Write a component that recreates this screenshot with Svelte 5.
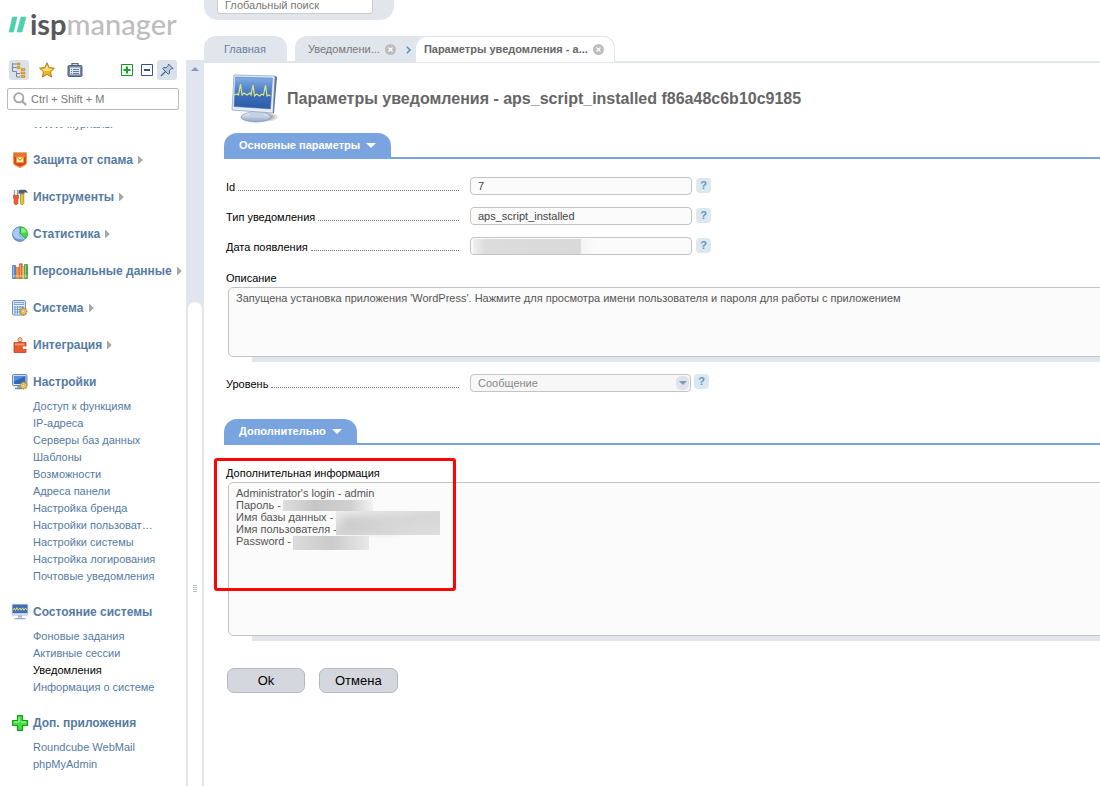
<script>
    let quickFilter = '';
    let globalSearch = '';
    let notificationId = '7';
    let notificationType = 'aps_script_installed';
    let notificationDate = '';
    let description = "Запущена установка приложения 'WordPress'. Нажмите для просмотра имени пользователя и пароля для работы с приложением";
    let level = 'message';
    let details = [
        "Administrator's login - admin",
        'Пароль -',
        'Имя базы данных -',
        'Имя пользователя -',
        'Password -'
    ].join('\n');

    const menu = [
        { title: 'Защита от спама', icon: 'shield' },
        { title: 'Инструменты', icon: 'tools' },
        { title: 'Статистика', icon: 'pie' },
        { title: 'Персональные данные', icon: 'books' },
        { title: 'Система', icon: 'system' },
        { title: 'Интеграция', icon: 'puzzle' },
        {
            title: 'Настройки',
            icon: 'settings',
            items: [
                'Доступ к функциям',
                'IP-адреса',
                'Серверы баз данных',
                'Шаблоны',
                'Возможности',
                'Адреса панели',
                'Настройка бренда',
                'Настройки пользоват…',
                'Настройки системы',
                'Настройка логирования',
                'Почтовые уведомления'
            ]
        },
        {
            title: 'Состояние системы',
            icon: 'monitor',
            items: ['Фоновые задания', 'Активные сессии', 'Уведомления', 'Информация о системе']
        },
        {
            title: 'Доп. приложения',
            icon: 'plus',
            items: ['Roundcube WebMail', 'phpMyAdmin']
        }
    ];

    const current = 'Уведомления';
</script>

{#snippet gear()}
    <g stroke="#a87a1c" stroke-width="1.6">
        <path d="M11.5 7.5v8M7.5 11.5h8M8.7 8.7l5.6 5.6M14.3 8.7l-5.6 5.6" />
    </g>
    <circle cx="11.5" cy="11.5" r="2.9" fill="#f6d76a" stroke="#b8892a" stroke-width=".8" />
    <circle cx="11.5" cy="11.5" r="1.1" fill="#fff" stroke="#a87a1c" stroke-width=".5" />
{/snippet}

{#snippet menuIcon(name)}
    <svg class="menu-icon" viewBox="0 0 16 16" aria-hidden="true">
        {#if name === 'shield'}
            <path d="M1.5.8h13v10.4c0 1.8-4.8 3.1-6.5 4.4-1.7-1.3-6.5-2.6-6.5-4.4z" fill="#e8401c" stroke="#e0a850" stroke-width="1.2" />
            <path d="M2.6 2h10.8v3H2.6z" fill="#f0704a" />
            <path d="M4.5 5h7v5.500h-7z" fill="#fff3a0" stroke="#e8a030" stroke-width=".6" />
            <path d="M4.700 5.200L8 8.200l3.300-3" fill="none" stroke="#a8781c" stroke-width=".9" />
        {:else if name === 'tools'}
            <path d="M2.5 1v5M5.5 1v5" stroke="#8fa2b5" stroke-width="1.3" />
            <path d="M1.5 6h2v2h1V6h2v3.5l-.6 1V14c0 1.2-.8 1.6-1.9 1.6S2.1 15.200 2.1 14v-3.500l-.6-1z" fill="#ee5a32" stroke="#c93a1c" stroke-width=".6" />
            <path d="M6.5 1.5c1.4-.8 3-.8 6-.8 1.800 0 2.700 1.500 3.200 3.300l-3.200-.8v1.600h-6z" fill="#50606e" />
            <path d="M8.5 5h3.300v9.600c0 1.200-3.300 1.200-3.300 0z" fill="#ddc83a" stroke="#8e8424" stroke-width=".7" />
        {:else if name === 'pie'}
            <circle cx="7.8" cy="8.2" r="7.3" fill="#6d9ade" stroke="#3f6db5" stroke-width=".7" />
            <path d="M1 8.500a6.500 6.500 0 0 1 6.200-6.800v7.200l4 4.600C7 13 2 13 1 8.500z" fill="#a9caf3" />
            <path d="M8 8.200l4.800 5.300" stroke="#e6f0fc" stroke-width="1" />
            <path d="M8.5 8V.8c4 0 7 3.100 7 7 0 1.800-.6 3.400-1.700 4.800z" fill="#3ddb3c" stroke="#22a72a" stroke-width=".7" />
            <path d="M9.2 1.700c2.700.3 4.800 2.100 5.300 4.600L9.200 7z" fill="#8af07a" />
        {:else if name === 'books'}
            <path d="M.5 2.500h3.200v13H.5z" fill="#4b87d8" stroke="#2f62ad" stroke-width=".6" />
            <path d="M4 4.500h3v11H4z" fill="#f2a23c" stroke="#c86c1c" stroke-width=".6" />
            <path d="M7.400.8h2.800v14.700H7.400z" fill="#e8663a" stroke="#b93a1c" stroke-width=".6" />
            <path d="M10.200 3.500h1.800v12h-1.800z" fill="#f5cf78" stroke="#c99434" stroke-width=".5" />
            <path d="M12.500 1.500h3v14h-3z" fill="#48ad3c" stroke="#2d812a" stroke-width=".6" />
            <path d="M1.500 3v12M8.300 1.500v13M13.400 2v13" stroke="#fff" stroke-opacity=".45" />
            <path d="M.5 13h15" stroke="#fff0a0" stroke-opacity=".7" />
        {:else if name === 'system'}
            <rect x=".6" y=".6" width="12.8" height="14.4" rx="1" fill="#e9f1fb" stroke="#5f86bd" />
            <path d="M2 2h10v3H2z" fill="#7fa5da" />
            <path d="M2.500 3.500h9" stroke="#dce9f9" />
            <path d="M3 6v8M5.500 6v8M8 6v8M10.500 6v4M2 7h10M2 9.500h8M2 12h6" stroke="#7a9ccd" />
            {@render gear()}
        {:else if name === 'puzzle'}
            <path d="M7 4h2v2H7z" fill="#ea5a30" />
            <circle cx="8" cy="2.700" r="2" fill="#fde0d0" stroke="#dc5a34" />
            <path d="M2 5.500h12v3.800c-1.800-1-3.800-.3-3.800 1.400s2 2.300 3.800 1.300v3.500H2z" fill="#ea5a30" stroke="#c4401c" stroke-width=".8" />
            <path d="M3 6.500h9.500v1.800H3z" fill="#f99a74" />
        {:else if name === 'settings'}
            <rect x=".6" y=".6" width="14.300" height="11" rx="1" fill="#dbe7f6" stroke="#587caf" />
            <path d="M2 2h11.500v8H2z" fill="#2f68ba" />
            <path d="M2 2h11.500L2 7.500z" fill="#5791db" />
            <path d="M5.500 12h3l.5 2H5z" fill="#93a8c6" />
            <path d="M3 14.500h7" stroke="#7089ad" stroke-width="1.500" />
            {@render gear()}
        {:else if name === 'monitor'}
            <path d="M.3.4h15.400v10.800H.3z" fill="#dfe8f4" stroke="#9bb0d0" stroke-width=".6" />
            <path d="M.5.600h15v8.600H.5z" fill="#3f6fb5" />
            <path d="M1 6l1.500-2 1 2.500L5 3.600l1.300 2.700L8 4l1.200 2.300 1.500-2.500 1.200 2.500L13.500 4 15 6" fill="none" stroke="#f0e878" stroke-width=".9" />
            <path d="M6 11.300h4v2.200H6z" fill="#a9b8cf" />
            <path d="M2 15.200c0-2 12-2 12 0z" fill="#8fa5cc" />
        {:else if name === 'plus'}
            <path d="M5.500.700h5v4.800h4.900v5h-4.900v4.900h-5v-4.900H.700v-5h4.800z" fill="#3fe03f" stroke="#179f1e" stroke-width="1.200" />
            <path d="M7 2v5H2M9 7h5" fill="none" stroke="#b0fba0" />
        {/if}
    </svg>
{/snippet}

{#snippet closeTab()}
    <button class="close" type="button" aria-label="Закрыть">
        <svg width="11" height="11" viewBox="0 0 11 11">
            <circle cx="5.500" cy="5.500" r="5.500" fill="#bdbdbd" />
            <path d="M3.500 3.500l4 4M7.500 3.500l-4 4" stroke="#fff" stroke-width="1.200" />
        </svg>
    </button>
{/snippet}

{#snippet help()}
    <button class="help" type="button" aria-label="Справка">?</button>
{/snippet}

{#snippet sectionTab(title)}
    <h2 class="section-head">
        <button type="button">
            {title}
            <svg width="10" height="5" viewBox="0 0 10 5"><path d="M0 0h10L5 5z" fill="#fff" /></svg>
        </button>
    </h2>
{/snippet}

<div class="page">
    <aside>
        <a class="logo" href="#home">
            <svg width="17" height="15" viewBox="0 0 17 15" aria-hidden="true">
                <path d="M3.500 0H8L4.500 15H0zM12 0h5l-4 15H8z" fill="#4ed0a8" stroke="#4ed0a8" stroke-width=".6" />
            </svg>
            <span><b>isp</b>manager</span>
        </a>

        <div class="toolbar">
            <button class="tool active" type="button" aria-label="Меню">
                <svg width="16" height="16" viewBox="0 0 16 16">
                    <path d="M1.500 1v8.500h4M1.500 2h4M1.500 5.500h4M5.500 9.500V15H9M5.500 11.500H9" fill="none" stroke="#7d8795" />
                    <path d="M6 1h3v2H6zM6 4.500h3v2H6zM10 6.500h4v2h-4zM10 10h4v2h-4zM10 13.500h4v2h-4z" fill="#f0ad20" stroke="#c17e16" stroke-width=".5" />
                </svg>
            </button>
            <button class="tool" type="button" aria-label="Избранное">
                <svg width="16" height="16" viewBox="0 0 16 16">
                    <path d="M8 .8l2.200 4.800 5.200.600-3.900 3.500 1.100 5.300L8 12.400 3.400 15l1.100-5.300L.6 6.200l5.200-.6z" fill="#f8b520" stroke="#b5791c" />
                    <path d="M8 3l1.500 3.500 3.500.6-3 1.900H5L3 7.200l3.500-.7z" fill="#ffe584" />
                </svg>
            </button>
            <button class="tool" type="button" aria-label="Список">
                <svg width="16" height="16" viewBox="0 0 16 16">
                    <path d="M5 3.500V1.600h6v1.900" fill="none" stroke="#5b6b80" stroke-width="1.300" />
                    <rect x="1" y="3.500" width="14" height="11" rx="1.200" fill="#7187a3" stroke="#4e6079" />
                    <path d="M3 5.500h10v7H3z" fill="#dfe7f0" />
                    <path d="M4 7.500h1M6 7.500h6M4 9.500h1M6 9.500h6M4 11.500h1M6 11.500h6" stroke="#64788f" />
                </svg>
            </button>
            <span class="spacer"></span>
            <button class="box-btn" type="button" aria-label="Развернуть все">
                <svg width="12" height="12" viewBox="0 0 12 12">
                    <path d="M.5.5h11v11H.5z" fill="#fff" stroke="#119a1c" />
                    <path d="M6 2.500v7M2.500 6h7" stroke="#14a61d" stroke-width="2" />
                </svg>
            </button>
            <button class="box-btn" type="button" aria-label="Свернуть все">
                <svg width="12" height="12" viewBox="0 0 12 12">
                    <path d="M.5.5h11v11H.5z" fill="#fff" stroke="#36558c" />
                    <path d="M3 6h6" stroke="#36558c" stroke-width="2" />
                </svg>
            </button>
            <button class="tool active" type="button" aria-label="Закрепить">
                <svg width="14" height="14" viewBox="0 0 14 14">
                    <path d="M8.500 1l4.500 4.500-1.500.2-2.200 2.200.2 2.600-1.200.8-5.600-5.600.8-1.200 2.600.2L8.300 2.500z" fill="#b9c9de" stroke="#4c6486" />
                    <path d="M5.500 8.500L1 13" stroke="#4c6486" stroke-width="1.300" />
                </svg>
            </button>
        </div>

        <label class="filter">
            <svg width="14" height="14" viewBox="0 0 14 14" aria-hidden="true">
                <circle cx="5.800" cy="5.800" r="4.600" fill="none" stroke="#a3a3a3" stroke-width="1.800" />
                <path d="M9 9l4 4" stroke="#a3a3a3" stroke-width="2.200" />
            </svg>
            <input type="text" placeholder="Ctrl + Shift + M" aria-label="Поиск по меню" bind:value={quickFilter} />
        </label>

        <nav>
            <a class="scrolled" href="#logs">WWW журналы</a>
            {#each menu as section}
                <section class:open={section.items}>
                    <button class="menu-title" type="button">
                        {@render menuIcon(section.icon)}
                        <span>{section.title}</span>
                        {#if !section.items}
                            <svg width="5" height="8" viewBox="0 0 5 8" aria-hidden="true">
                                <path d="M.5.3L4.300 4 .5 7.700z" fill="#aaa" stroke="#888" stroke-width=".6" />
                            </svg>
                        {/if}
                    </button>
                    {#if section.items}
                        <ul>
                            {#each section.items as item}
                                <li><a href="#menu" class:current={item === current}>{item}</a></li>
                            {/each}
                        </ul>
                    {/if}
                </section>
            {/each}
        </nav>
    </aside>

    <div class="splitter">
        <svg class="up" width="8" height="4" viewBox="0 0 8 4" aria-hidden="true"><path d="M0 4h8L4 0z" fill="#7f9cc0" /></svg>
        <div class="thumb">
            <svg width="4" height="8" viewBox="0 0 4 8" aria-hidden="true"><path d="M0 .5h4M0 2.500h4M0 4.500h4M0 6.500h4" stroke="#b4bcc8" /></svg>
        </div>
    </div>

    <main>
        <div class="global-search">
            <input type="text" placeholder="Глобальный поиск" aria-label="Глобальный поиск" bind:value={globalSearch} />
        </div>

        <div class="tabs">
            <a class="tab home" href="#home">Главная</a>
            <div class="tab-group">
                <div class="tab">
                    <a href="#notifications">Уведомлени...</a>
                    {@render closeTab()}
                    <svg class="chevron" width="5" height="8" viewBox="0 0 5 8" aria-hidden="true"><path d="M.8.800L4 4 .8 7.200" fill="none" stroke="#4f93ba" stroke-width="1.500" /></svg>
                </div>
                <div class="tab selected">
                    <a href="#params">Параметры уведомления - a...</a>
                    {@render closeTab()}
                </div>
            </div>
        </div>

        <div class="content">
            <header>
                <svg width="48" height="50" viewBox="0 0 48 50" aria-hidden="true">
                    <defs>
                        <linearGradient id="screen" x1="0" y1="0" x2="0" y2="1">
                            <stop offset="0" stop-color="#82afe6" />
                            <stop offset=".6" stop-color="#3a6cb8" />
                            <stop offset="1" stop-color="#2d5ca8" />
                        </linearGradient>
                        <linearGradient id="stand" x1="0" y1="0" x2="0" y2="1">
                            <stop offset="0" stop-color="#f5f8fc" />
                            <stop offset="1" stop-color="#8ba3c4" />
                        </linearGradient>
                        <radialGradient id="shade">
                            <stop offset="0" stop-color="#555" stop-opacity=".8" />
                            <stop offset="1" stop-color="#555" stop-opacity="0" />
                        </radialGradient>
                    </defs>
                    <ellipse cx="36" cy="43" rx="12" ry="5" fill="url(#shade)" />
                    <ellipse cx="25" cy="43" rx="15" ry="5" fill="url(#stand)" stroke="#7c93b3" stroke-width=".7" />
                    <path d="M19 36h13l1 6c-4 2-11 2-15 0z" fill="#c3d1e3" />
                    <path d="M3 1l41 1-2 37L1 36z" fill="#e7eef8" stroke="#8fa5c4" stroke-width=".8" />
                    <path d="M44 2l2 1-3 36h-1z" fill="#5f7391" />
                    <path d="M4.500 3l37 1-2 31L3 32.500z" fill="url(#screen)" stroke="#4d76b3" stroke-width=".5" />
                    <path d="M3 21l3-1 1.500 1L9.500 10l1.500 11 2-2 3 2 3-2 1 2L22 11l1.500 11 2-2 3 2 2.500-2 1.500 1L34.500 11 36 22l1.500-1 2 1" fill="none" stroke="#d9e77a" stroke-width="1.200" />
                </svg>
                <h1>Параметры уведомления - aps_script_installed f86a48c6b10c9185</h1>
            </header>

            {@render sectionTab('Основные параметры')}

            <div class="fields">
                <div class="row">
                    <label for="id">Id</label><span class="dots"></span>
                    <input id="id" type="text" readonly value={notificationId} />
                    {@render help()}
                </div>
                <div class="row">
                    <label for="type">Тип уведомления</label><span class="dots"></span>
                    <input id="type" type="text" readonly value={notificationType} />
                    {@render help()}
                </div>
                <div class="row">
                    <label for="date">Дата появления</label><span class="dots"></span>
                    <div class="date">
                        <input id="date" type="text" readonly value={notificationDate} />
                        <span class="mask"></span>
                    </div>
                    {@render help()}
                </div>

                <div class="area description">
                    <label for="description">Описание</label>
                    <textarea id="description" readonly value={description}></textarea>
                </div>

                <div class="row">
                    <label for="level">Уровень</label><span class="dots"></span>
                    <div class="select">
                        <select id="level" disabled bind:value={level}>
                            <option value="message">Сообщение</option>
                        </select>
                        <span class="arrow"><svg width="8" height="4" viewBox="0 0 8 4" aria-hidden="true"><path d="M0 0h8L4 4z" fill="#7f99bd" /></svg></span>
                    </div>
                    {@render help()}
                </div>
            </div>

            {@render sectionTab('Дополнительно')}

            <div class="area details">
                <label for="details">Дополнительная информация</label>
                <textarea id="details" readonly value={details}></textarea>
                <span class="mask password"></span>
                <span class="mask database"></span>
                <span class="mask db-password"></span>
                <span class="highlight"></span>
            </div>

            <div class="actions">
                <button type="button">Ok</button>
                <button type="button">Отмена</button>
            </div>
        </div>
    </main>
</div>

<style>
    :global(body) {
        background: #fff;
        font-family: "Liberation Sans", Arial, sans-serif;
        font-size: 11px;
    }

    .page {
        display: grid;
        grid-template-columns: 186px 18px minmax(0, 1fr);
        height: 100vh;
        overflow: hidden;
    }

    * {
        box-sizing: border-box;
    }

    button {
        padding: 0;
        border: none;
        background: none;
        font: inherit;
        cursor: pointer;
    }

    input,
    select,
    textarea {
        font: inherit;
        outline: none;
    }

    a {
        color: #557ba3;
        text-decoration: none;
    }

    svg {
        flex: none;
        display: block;
        overflow: visible;
    }

    aside {
        display: flex;
        flex-direction: column;
        min-height: 0;
    }

    .logo {
        display: flex;
        align-items: center;
        gap: 4px;
        height: 48px;
        padding-left: 9px;
        color: #bdbdbd;
        font-family: Lato, sans-serif;
        font-size: 29px;
        font-weight: 500;
        line-height: 48px;
    }

    .logo b {
        color: #58595b;
    }

    .toolbar {
        display: flex;
        align-items: center;
        gap: 8px;
        margin-top: 12px;
        padding: 0 9px;
    }

    .tool {
        display: flex;
        align-items: center;
        justify-content: center;
        width: 20px;
        height: 20px;
        border-radius: 3px;
    }

    .tool.active {
        background: #d9e1ec;
    }

    .spacer {
        flex: 1;
    }

    .box-btn + .tool {
        margin-left: -4px;
    }

    .filter {
        display: flex;
        align-items: center;
        gap: 2px;
        height: 22px;
        margin: 8px 7px 0;
        padding: 0 5px;
        border: 1px solid #bbb;
        border-radius: 2px;
    }

    .filter input {
        flex: 1;
        min-width: 0;
        border: none;
        background: none;
    }

    input::placeholder {
        color: #777;
        opacity: 1;
    }

    nav {
        flex: 1;
        min-height: 0;
        margin-top: 17px;
        overflow: hidden;
    }

    .scrolled {
        display: block;
        margin: -9px 0 22px 33px;
        line-height: 12px;
    }

    nav section {
        margin-bottom: 20px;
    }

    nav section.open {
        margin-bottom: 19px;
    }

    .menu-title {
        display: flex;
        align-items: center;
        gap: 5px;
        height: 17px;
        padding-left: 12px;
        color: #557ba3;
        font-size: 12px;
        font-weight: bold;
        line-height: 17px;
        white-space: nowrap;
    }

    .menu-title svg {
        margin-bottom: 2px;
    }

    .menu-icon {
        width: 16px;
        height: 16px;
    }

    nav ul {
        margin: 7px 0 0;
        padding: 0 0 0 33px;
        list-style: none;
    }

    nav li {
        line-height: 17px;
        white-space: nowrap;
    }

    nav .current {
        color: #000;
    }

    .splitter {
        display: flex;
        flex-direction: column;
        align-items: center;
        margin-top: 60px;
        background: #e1e5ed;
    }

    .up {
        margin: 7px 0 231px;
    }

    .thumb {
        display: flex;
        flex: 1;
        justify-content: center;
        width: 14px;
        padding-top: 283px;
        border-radius: 7px 7px 0 0;
        background: #fff;
    }

    main {
        min-width: 0;
        overflow: hidden;
    }

    .global-search {
        display: flex;
        align-items: flex-end;
        width: 190px;
        height: 20px;
        padding: 0 21px 6px 13px;
        border-radius: 0 0 14px 14px;
        background: #e1e5ec;
    }

    .global-search input {
        width: 100%;
        height: 18px;
        padding: 0 7px;
        border: 1px solid #ccc;
        border-radius: 3px;
    }

    .tabs {
        display: flex;
        gap: 8px;
        margin-top: 16px;
        border-bottom: 2px solid #e1e5ec;
    }

    .tab {
        display: flex;
        align-items: center;
        height: 25px;
        padding: 0 5px 0 13px;
        white-space: nowrap;
    }

    .tab a {
        color: #777;
    }

    .home {
        padding: 0 21px 0 20px;
        color: #667f9c;
    }

    .home,
    .tab-group {
        border-radius: 12px 12px 0 0;
        background: #e1e5ec;
    }

    .tab-group {
        display: flex;
        height: 25px;
    }

    .tab.selected {
        height: 25px;
        margin: 1px 1px 0 0;
        padding: 0 10px 2px 8px;
        border-radius: 11px 11px 0 0;
        background: #fff;
        font-weight: bold;
    }

    .tab.selected a {
        color: #666;
    }

    .close {
        margin: 2px 0 0 5px;
    }

    .chevron {
        margin: 2px 0 0 10px;
    }

    .content {
        padding-left: 20px;
    }

    header {
        display: flex;
        align-items: center;
        gap: 8px;
        height: 70px;
        padding: 2px 0 0 7px;
    }

    h1 {
        margin: 0;
        color: #666;
        font-size: 16px;
        white-space: nowrap;
    }

    .section-head {
        margin: 0;
        border-bottom: 2px solid #7aa4e0;
        font-size: 11px;
        line-height: 24px;
    }

    .section-head button {
        display: flex;
        align-items: center;
        gap: 6px;
        height: 24px;
        padding: 0 15px;
        border-radius: 13px 13px 0 0;
        background: #7aa4e0;
        color: #fff;
        font-weight: bold;
    }

    .fields {
        padding: 18px 0 15px;
    }

    .row {
        display: grid;
        grid-template-columns: auto 1fr 222px 19px;
        width: 487px;
        height: 18px;
        margin-bottom: 12px;
        padding-left: 2px;
    }

    .row label {
        line-height: 20px;
    }

    .dots {
        height: 14px;
        margin: 0 11px 0 3px;
        border-bottom: 1px dotted #777;
    }

    .row input,
    .row select {
        width: 222px;
        height: 18px;
        padding: 0 7px;
        border: 1px solid #c4c4c4;
        border-radius: 4px;
        background: #fbfbfb;
        color: #444;
    }

    .help {
        width: 15px;
        height: 15px;
        margin: 1px 0 0 4px;
        border-radius: 4px;
        background: #dbe8ef;
        color: #6399bc;
        font-size: 11px;
        font-weight: bold;
        line-height: 15px;
    }

    .date,
    .select {
        position: relative;
    }

    .mask {
        position: absolute;
        background: linear-gradient(90deg, #e2e2e2, #d0d0d0 50%, #dcdcdc);
    }

    .date .mask {
        top: 2px;
        left: 3px;
        width: 122px;
        height: 15px;
        background: linear-gradient(90deg, #f0f0f0, #dcdcdc 10%, #d9d9d9 88%, #f4f4f4 89%, #fbfbfb);
    }

    .select {
        width: 221px;
    }

    .select select {
        display: block;
        width: 100%;
        appearance: none;
        background: #f7f7f7;
        color: #888;
        opacity: 1;
    }

    .arrow {
        position: absolute;
        top: 2px;
        right: 2px;
        display: flex;
        align-items: center;
        justify-content: center;
        width: 13px;
        height: 14px;
        border-radius: 5px;
        background: #dfe4ec;
        pointer-events: none;
    }

    .select + .help {
        margin-top: 0;
        margin-left: 2px;
    }

    .area {
        position: relative;
        padding-left: 4px;
    }

    .area label {
        display: block;
        margin-left: -2px;
        line-height: 18px;
    }

    textarea {
        display: block;
        width: calc(100% + 10px);
        padding: 4px 7px;
        border: 1px solid #c4c4c4;
        border-radius: 5px;
        background: #fbfbfb;
        color: #555;
        line-height: 12px;
        resize: none;
    }

    .area::after {
        content: "";
        display: block;
        height: 5px;
        margin-left: 24px;
        background: #e1e5ec;
    }

    .description {
        margin: 14px 0 12px;
    }

    .description textarea {
        height: 70px;
    }

    .details {
        margin-top: 19px;
    }

    .details textarea {
        height: 154px;
    }

    .password {
        top: 36px;
        left: 59px;
        width: 90px;
        height: 11px;
        background: linear-gradient(90deg, #dedede, #c6c6c6 35%, #d0d0d0 75%, #f4f4f4);
    }

    .database {
        top: 47px;
        left: 112px;
        width: 104px;
        height: 24px;
        background: linear-gradient(170deg, #ededed, #d6d6d6 50%, #dedede);
    }

    .database::before {
        content: "";
        position: absolute;
        inset: 6px 40px 3px 6px;
        background: linear-gradient(90deg, #cacaca, #d8d8d8);
        filter: blur(4px);
    }

    .db-password {
        top: 72px;
        left: 69px;
        width: 76px;
        height: 14px;
        background: linear-gradient(90deg, #dcdcdc, #cbcbcb 50%, #e8e8e8);
    }

    .highlight {
        position: absolute;
        top: -6px;
        left: -10px;
        width: 242px;
        height: 133px;
        border: 3px solid #fb0505;
        border-radius: 3px;
        pointer-events: none;
    }

    .actions {
        display: flex;
        gap: 14px;
        padding: 27px 0 0 3px;
    }

    .actions button {
        min-width: 78px;
        height: 25px;
        padding: 0 15px;
        border: 1px solid #b4b9c0;
        border-radius: 7px;
        background: #d4d8de;
        color: #000;
        font-size: 13px;
    }
</style>
